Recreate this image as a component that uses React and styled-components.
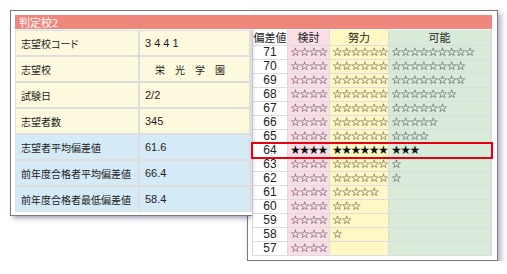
import React from 'react';
import styled, { createGlobalStyle } from 'styled-components';

const GlobalStyle = createGlobalStyle`
  body {
    margin: 0;
    background: #fff;
    font-family: "Liberation Sans", "Noto Sans CJK JP", sans-serif;
    color: #222;
    font-feature-settings: "palt";
  }
`;

const info = [
  { label: '志望校コード', value: '3 4 4 1', tone: 'yellow' },
  { label: '志望校', value: '　栄　光　学　園', tone: 'yellow', wide: true },
  { label: '試験日', value: '2/2', tone: 'yellow' },
  { label: '志望者数', value: '345', tone: 'yellow' },
  { label: '志望者平均偏差値', value: '61.6', tone: 'blue' },
  { label: '前年度合格者平均偏差値', value: '66.4', tone: 'blue' },
  { label: '前年度合格者最低偏差値', value: '58.4', tone: 'blue' },
];

const scores = [
  [71, 4, 6, 9],
  [70, 4, 6, 8],
  [69, 4, 6, 8],
  [68, 4, 6, 7],
  [67, 4, 6, 6],
  [66, 4, 6, 5],
  [65, 4, 6, 4],
  [64, 4, 6, 3],
  [63, 4, 6, 1],
  [62, 4, 6, 1],
  [61, 4, 5, 0],
  [60, 4, 3, 0],
  [59, 4, 2, 0],
  [58, 4, 1, 0],
  [57, 4, 0, 0],
];

const HIT = 64;

const tones = {
  yellow: '#fdf9dd',
  blue: '#d5eaf7',
  pink: '#fbdde6',
  cream: '#fff7c4',
  green: '#d8ebd9',
  white: '#fff',
};

const Stars = ({ count, filled }) => (
  <>
    {Array.from({ length: count }, (_, i) => (
      <Star key={i} $filled={filled}>
        {filled ? '★' : '☆'}
      </Star>
    ))}
  </>
);

export default function App() {
  return (
    <>
      <GlobalStyle />
      <Page>
        <LeftCard>
          <Header>判定校2</Header>
          <InfoTable>
            {info.map(row => (
              <React.Fragment key={row.label}>
                <InfoCell $tone={row.tone}>{row.label}</InfoCell>
                <InfoCell $tone={row.tone} $value $wide={row.wide}>
                  {row.value}
                </InfoCell>
              </React.Fragment>
            ))}
          </InfoTable>
        </LeftCard>
        <RightCard>
          <ScoreTable>
            <ScoreRow>
              <HeadCell $tone="white">偏差値</HeadCell>
              <HeadCell $tone="pink">検討</HeadCell>
              <HeadCell $tone="cream">努力</HeadCell>
              <HeadCell $tone="green">可能</HeadCell>
            </ScoreRow>
            {scores.map(([value, k, d, p]) => {
              const hit = value === HIT;
              return (
                <ScoreRow key={value} $hit={hit}>
                  <NumCell>{value}</NumCell>
                  <StarCell $tone="pink">
                    <Stars count={k} filled={hit} />
                  </StarCell>
                  <StarCell $tone="cream">
                    <Stars count={d} filled={hit} />
                  </StarCell>
                  <StarCell $tone="green">
                    <Stars count={p} filled={hit} />
                  </StarCell>
                </ScoreRow>
              );
            })}
          </ScoreTable>
        </RightCard>
      </Page>
    </>
  );
}

const Page = styled.div`
  display: flex;
  align-items: flex-start;
  padding: 10px 0 0 10px;
`;

const LeftCard = styled.div`
  position: relative;
  z-index: 1;
  width: 237px;
  padding: 4px 0 3px 4px;
  background: #fff;
  border: 1px solid #7a7a7a;
  border-right: none;
  box-shadow: 1px 4px 5px -2px rgba(70, 70, 120, 0.55);
`;

const Header = styled.div`
  width: 473px;
  height: 14px;
  padding-left: 4px;
  background: #f0877d;
  color: #fff;
  font-family: "Noto Sans CJK JP", sans-serif;
  font-size: 11px;
  line-height: 14px;
`;

const InfoTable = styled.div`
  display: grid;
  grid-template-columns: 122px 109px;
  grid-auto-rows: 24px;
  gap: 2px;
  margin-top: 1px;
  padding: 1px;
  background: #dedede;
`;

const InfoCell = styled.div`
  display: flex;
  align-items: center;
  padding-left: 5px;
  background: ${p => tones[p.$tone]};
  font-size: ${p => (p.$value && !p.$wide ? '11px' : '10px')};
  font-feature-settings: ${p => (p.$wide ? 'normal' : '"palt"')};
  color: #222;
  white-space: nowrap;
`;

const RightCard = styled.div`
  margin-left: -5px;
  width: 240px;
  padding: 19px 5px 4px 4px;
  background: #fff;
  border: 1px solid #7a7a7a;
  box-shadow: 3px 3px 6px rgba(70, 70, 120, 0.45);
`;

const ScoreTable = styled.div`
  display: flex;
  flex-direction: column;
  gap: 1px;
  padding: 0 1px 1px;
  background: #dcdcdc;
`;

const ScoreRow = styled.div`
  display: grid;
  grid-template-columns: 34px 41px 58px 101px;
  column-gap: 1px;
  outline: ${p => (p.$hit ? '2px solid #e60012' : 'none')};
  outline-offset: 0;
  position: ${p => (p.$hit ? 'relative' : 'static')};
  z-index: ${p => (p.$hit ? 1 : 'auto')};
`;

const HeadCell = styled.div`
  height: 15px;
  background: ${p => tones[p.$tone]};
  font-family: "Noto Sans CJK JP", sans-serif;
  font-size: 11px;
  line-height: 15px;
  text-align: center;
  white-space: nowrap;
`;

const NumCell = styled.div`
  height: 13px;
  background: #fff;
  font-size: 12px;
  line-height: 13px;
  text-align: center;
`;

const StarCell = styled.div`
  display: flex;
  height: 13px;
  padding-left: 2px;
  background: ${p => tones[p.$tone]};
  overflow: hidden;
`;

const Star = styled.span`
  display: inline-block;
  width: 9.2px;
  flex: none;
  text-align: center;
  color: #111;
  font-family: "DejaVu Sans", sans-serif;
  font-feature-settings: normal;
  font-size: 12px;
  line-height: 13px;
`;
